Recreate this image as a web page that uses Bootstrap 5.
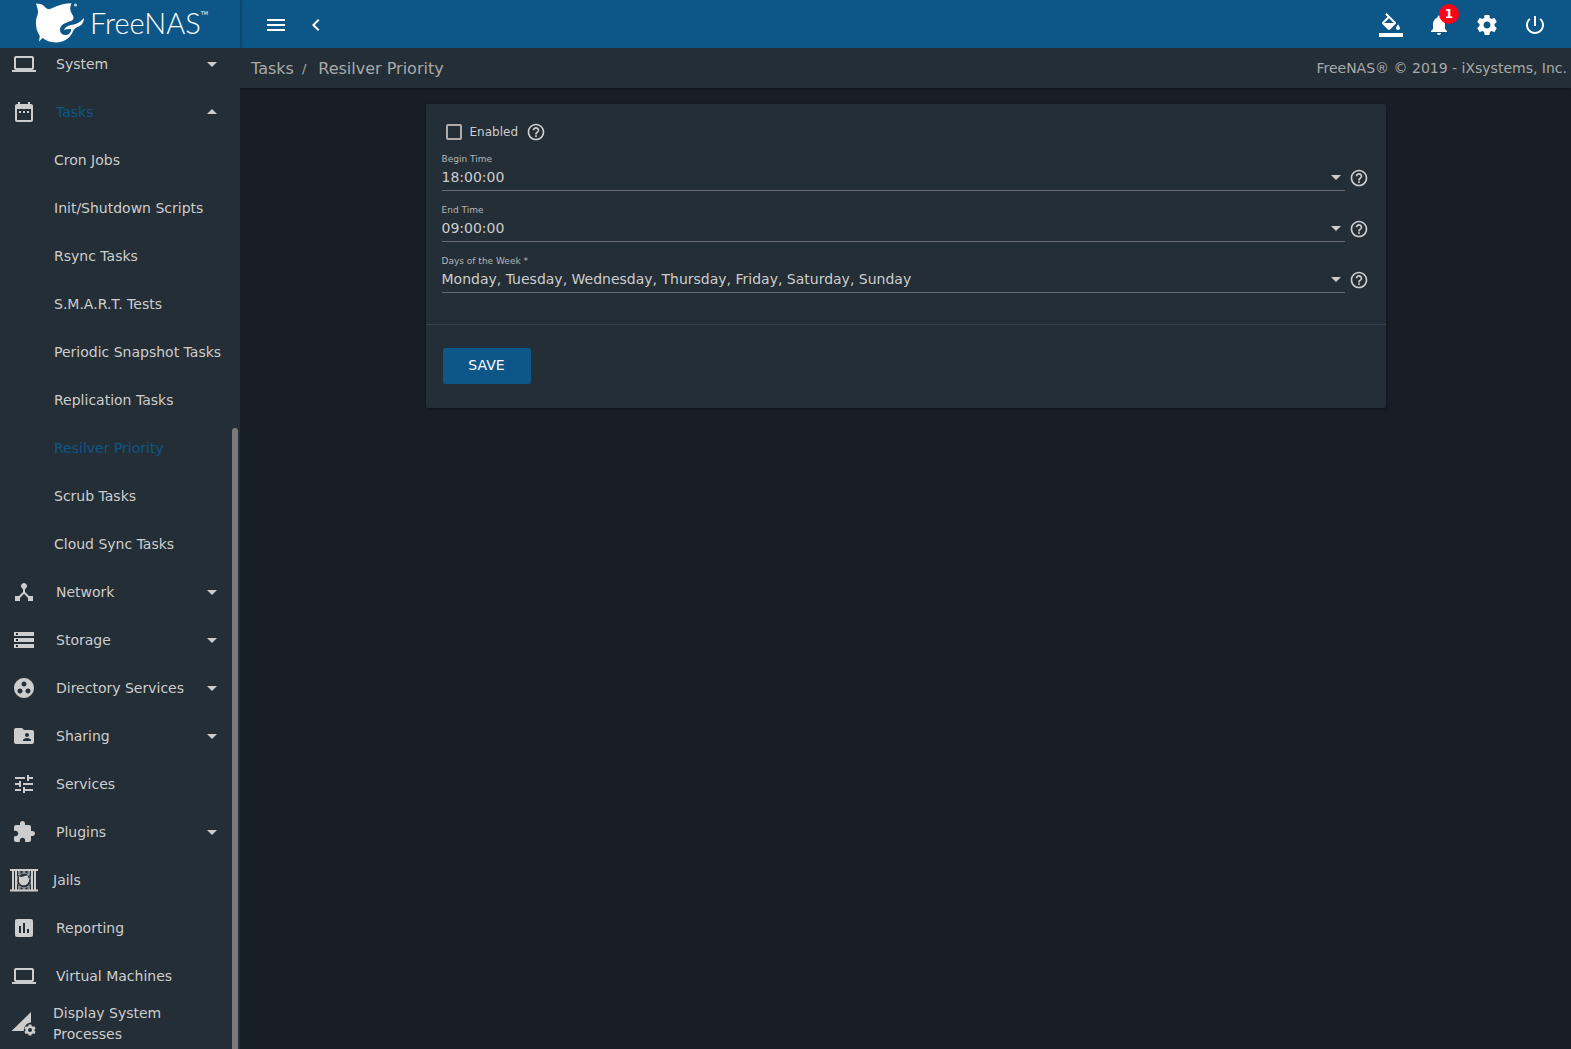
<!DOCTYPE html>
<html lang="en">
<head>
<meta charset="utf-8">
<meta name="viewport" content="width=device-width, initial-scale=1">
<title>FreeNAS - Resilver Priority</title>
<link href="https://cdn.jsdelivr.net/npm/bootstrap@5.3.0/dist/css/bootstrap.min.css" rel="stylesheet">
<style>
:root{--nas-blue:#0d5788;--nas-panel:#242e36;--nas-bg:#181e26;--nas-fg:#cdcdcd;--nas-dim:#a9a9a9}
body{background:var(--nas-bg);color:var(--nas-fg);font-family:"DejaVu Sans",sans-serif;font-size:14px;line-height:21px}
svg{fill:currentColor;flex:none;display:block}
.nas-top{background:var(--nas-blue);height:48px;color:#fff}
.nas-brand{width:240px;padding-left:35px;box-shadow:1px 0 3px rgba(0,0,0,.3);color:#fff;text-decoration:none}
.nas-word{font-family:Lato,"Open Sans",sans-serif;font-weight:300;font-size:29px;line-height:44px;padding-bottom:2px;margin-left:5px}
.nas-tm{font-size:5px;line-height:8px;margin-top:9px;align-self:flex-start}
.nas-tools{flex:1;padding:2px 16px 0 16px}
.icon-btn{width:40px;height:40px;padding:0;color:#fff;border:0;display:flex;align-items:center;justify-content:center;position:relative}
.icon-btn:hover{color:#fff}
.bell-count{position:absolute;top:-1px;right:0;width:20px;height:20px;border-radius:50%;background:#ff0018;font-size:12px;font-weight:700;line-height:21px}
.nas-side{width:240px;background:var(--nas-panel);padding-bottom:1px;position:relative}
.nas-thumb{position:absolute;right:2px;bottom:0;width:6px;height:62%;border-radius:3px 3px 0 0;background:#787a7b}
.side-item{display:flex;align-items:center;height:48px;flex:none;padding:0 16px 0 12px;color:var(--nas-fg);text-decoration:none}
.side-item .side-text{margin-left:20px;flex:1}
.side-wide{padding-left:10px;padding-right:48px}
.side-wide .side-text{margin-left:15px}
.side-sub{padding-left:54px}
.side-sub .side-text{margin-left:0}
.side-on{color:var(--nas-blue)}
.side-on svg{color:var(--nas-fg)}
.crumb-bar{background:var(--nas-panel);height:40px;padding:0 4px 0 11px;color:var(--nas-dim);box-shadow:0 1px 3px rgba(0,0,0,.35)}
.crumb-bar a,.crumb-bar .breadcrumb-item{color:var(--nas-dim);text-decoration:none;font-size:16px}
.crumb-bar .breadcrumb-item+.breadcrumb-item{padding-left:8px}
.crumb-bar .breadcrumb-item+.breadcrumb-item::before{color:var(--nas-dim);font-size:13px;padding-right:12px}
.nas-card{max-width:960px;background:var(--nas-panel);border-radius:2px;box-shadow:0 1px 3px rgba(0,0,0,.4)}
.nas-fields{padding:16px 16px 31px}
.check-row{height:24px;padding-left:4px;gap:8px;font-size:12px;margin-bottom:9px}
.check-row .nas-check{width:16px;height:16px;margin:0;border:2px solid #b0abab;border-radius:2px;background-color:transparent}
.field-row{gap:4px;padding-right:1px}
.field-row+.field-row{margin-top:13px}
.field-row label{font-size:9px;line-height:12px;color:#b4b6b8;display:block}
.nas-select{appearance:none;background:transparent;border:0;border-bottom:1px solid #6a6c75;border-radius:0;color:var(--nas-fg);height:26px;padding:0 24px 1px 0;width:100%;display:block}
.nas-select:focus{outline:0;border-color:#fff}
.nas-select option{background:var(--nas-panel)}
.select-wrap{position:relative}
.select-wrap svg{position:absolute;right:-3px;top:0;pointer-events:none}
.help-btn{border:0;background:transparent;padding:0;color:var(--nas-fg)}
.field-row .help-btn{margin-bottom:3px}
.nas-foot{border-top:1px solid #36424c;padding:23px 17px 24px}
.nas-save,.nas-save:hover{width:88px;height:36px;padding:0 0 2px;border:0;border-radius:2px;background:var(--nas-blue);color:#fff;font-size:14px}
</style>
</head>
<body class="vh-100 d-flex flex-column overflow-hidden">
<svg class="d-none" aria-hidden="true">
<symbol id="i-laptop" viewBox="0 0 24 24"><path d="M20 18c1.1 0 1.990-.9 1.990-2L22 6c0-1.100-.9-2-2-2H4c-1.100 0-2 .9-2 2v10c0 1.100.9 2 2 2H0v2h24v-2h-4zM4 6h16v10H4V6z"/></symbol>
<symbol id="i-down" viewBox="0 0 24 24"><path d="M7 10l5 5 5-5z"/></symbol>
<symbol id="i-up" viewBox="0 0 24 24"><path d="M7 14l5-5 5 5z"/></symbol>
<symbol id="i-help" viewBox="0 0 24 24"><path d="M11 18h2v-2h-2v2zm1-16C6.480 2 2 6.480 2 12s4.480 10 10 10 10-4.480 10-10S17.520 2 12 2zm0 18c-4.410 0-8-3.590-8-8s3.590-8 8-8 8 3.590 8 8-3.590 8-8 8zm0-14c-2.210 0-4 1.790-4 4h2c0-1.100.9-2 2-2s2 .9 2 2c0 2-3 1.750-3 5h2c0-2.250 3-2.500 3-5 0-2.210-1.790-4-4-4z"/></symbol>
</svg>

<header class="nas-top d-flex flex-shrink-0">
<a class="nas-brand h-100 d-flex align-items-center" href="#">
<svg width="50" height="48" viewBox="0 0 50 48" aria-hidden="true"><path d="M1 3.500C3 4 5 3.500 7 4.500c2 .8 3 3.500 6 4.700C18 9 23 3.500 36.500 3.200c-1.800 4-1.800 7 .2 10.300 1 1.800 2.200 3.500 1.800 5-.8 2-2.500 2.500-5.500 3.500-5 1.500-8.500 4.500-8 8.500.5 3.500 3.500 5 6.500 4.500 3-.8 5-3 4.500-6-2-.3-4.500 0-7 1 1-2.500 3.500-4.500 7-5 5-.7 9-2.500 13-7-.2 4.500-2.500 8-7.500 9.500-2.500 1-3 3-4.500 6C33.500 39 28 42.700 21 42.500c-6-.2-10-1.800-13.500-4.500L4 41.500 4.800 36C2 32 .6 27 1 21c.2-4 2.200-6 2-9.500C2.900 8 1.500 6 1 3.500z"/><circle cx="40.500" cy="5" r="1.600" opacity=".7"/></svg>
<span class="nas-word">FreeNAS</span><span class="nas-tm">TM</span></a>
<div class="nas-tools d-flex align-items-center">
<button class="btn icon-btn" type="button" aria-label="Menu"><svg width="24" height="24" viewBox="0 0 24 24"><path d="M3 18h18v-2H3v2zm0-5h18v-2H3v2zm0-7v2h18V6H3z"/></svg></button>
<button class="btn icon-btn" type="button" aria-label="Collapse"><svg width="24" height="24" viewBox="0 0 24 24"><path d="M15.410 7.410L14 6l-6 6 6 6 1.410-1.410L10.830 12z"/></svg></button>
<div class="d-flex gap-2 ms-auto">
<button class="btn icon-btn" type="button" aria-label="Theme"><svg width="24" height="24" viewBox="0 0 24 24"><path d="M16.560 8.940L7.620 0 6.210 1.410l2.380 2.380-5.150 5.150c-.59.59-.59 1.540 0 2.120l5.500 5.500c.29.29.68.44 1.060.44s.77-.15 1.060-.44l5.500-5.500c.59-.58.59-1.530 0-2.120zM5.210 10L10 5.210 14.790 10H5.210zM19 11.500s-2 2.170-2 3.500c0 1.100.9 2 2 2s2-.9 2-2c0-1.330-2-3.500-2-3.500zM0 20h24v4H0z"/></svg></button>
<button class="btn icon-btn" type="button" aria-label="Notifications"><svg width="24" height="24" viewBox="0 0 24 24"><path d="M12 22c1.100 0 2-.9 2-2h-4c0 1.100.89 2 2 2zm6-6v-5c0-3.070-1.640-5.640-4.500-6.320V4c0-.83-.67-1.500-1.500-1.500s-1.500.67-1.500 1.500v.68C7.630 5.360 6 7.920 6 11v5l-2 2v1h16v-1l-2-2z"/></svg><span class="bell-count">1</span></button>
<button class="btn icon-btn" type="button" aria-label="Settings"><svg width="24" height="24" viewBox="0 0 24 24"><path d="M19.430 12.980c.04-.32.07-.64.07-.98s-.03-.66-.07-.98l2.110-1.650c.19-.15.24-.42.12-.64l-2-3.460c-.12-.22-.39-.3-.61-.22l-2.490 1c-.52-.4-1.080-.73-1.690-.98l-.38-2.650C14.460 2.180 14.250 2 14 2h-4c-.25 0-.46.18-.49.42l-.38 2.650c-.61.25-1.170.59-1.690.98l-2.490-1c-.23-.09-.49 0-.61.22l-2 3.460c-.13.22-.07.49.12.64l2.110 1.650c-.04.32-.07.65-.07.98s.03.66.07.98l-2.110 1.650c-.19.15-.24.42-.12.64l2 3.460c.12.22.39.3.61.22l2.490-1c.52.4 1.080.73 1.690.98l.38 2.650c.03.24.24.42.49.42h4c.25 0 .46-.18.49-.42l.38-2.650c.61-.25 1.170-.59 1.690-.98l2.490 1c.23.09.49 0 .61-.22l2-3.460c.12-.22.07-.49-.12-.64l-2.110-1.650zM12 15.500c-1.930 0-3.500-1.570-3.500-3.500s1.570-3.500 3.500-3.500 3.500 1.570 3.500 3.500-1.570 3.500-3.500 3.500z"/></svg></button>
<button class="btn icon-btn" type="button" aria-label="Power"><svg width="24" height="24" viewBox="0 0 24 24"><path d="M13 3h-2v10h2V3zm4.830 2.170l-1.420 1.420C17.990 7.860 19 9.810 19 12c0 3.870-3.130 7-7 7s-7-3.130-7-7c0-2.190 1.010-4.140 2.580-5.420L6.170 5.170C4.230 6.820 3 9.260 3 12c0 4.970 4.030 9 9 9s9-4.030 9-9c0-2.740-1.230-5.180-3.170-6.830z"/></svg></button>
</div></div>
</header>

<div class="d-flex flex-grow-1 overflow-hidden">
<nav class="nas-side d-flex flex-column justify-content-end overflow-hidden flex-shrink-0">
<a class="side-item" href="#"><svg width="24" height="24"><use href="#i-laptop"/></svg><span class="side-text">System</span><svg width="24" height="24"><use href="#i-down"/></svg></a>
<a class="side-item side-on" href="#"><svg width="24" height="24" viewBox="0 0 24 24"><path d="M9 11H7v2h2v-2zm4 0h-2v2h2v-2zm4 0h-2v2h2v-2zm2-7h-1V2h-2v2H8V2H6v2H5c-1.110 0-1.990.9-1.990 2L3 20c0 1.100.89 2 2 2h14c1.100 0 2-.9 2-2V6c0-1.100-.9-2-2-2zm0 16H5V9h14v11z"/></svg><span class="side-text">Tasks</span><svg width="24" height="24"><use href="#i-up"/></svg></a>
<a class="side-item side-sub" href="#"><span class="side-text">Cron Jobs</span></a>
<a class="side-item side-sub" href="#"><span class="side-text">Init/Shutdown Scripts</span></a>
<a class="side-item side-sub" href="#"><span class="side-text">Rsync Tasks</span></a>
<a class="side-item side-sub" href="#"><span class="side-text">S.M.A.R.T. Tests</span></a>
<a class="side-item side-sub" href="#"><span class="side-text">Periodic Snapshot Tasks</span></a>
<a class="side-item side-sub" href="#"><span class="side-text">Replication Tasks</span></a>
<a class="side-item side-sub side-on" href="#" aria-current="page"><span class="side-text">Resilver Priority</span></a>
<a class="side-item side-sub" href="#"><span class="side-text">Scrub Tasks</span></a>
<a class="side-item side-sub" href="#"><span class="side-text">Cloud Sync Tasks</span></a>
<a class="side-item" href="#"><svg width="24" height="24" viewBox="0 0 24 24"><path d="M17 16l-4-4V8.820C14.160 8.400 15 7.300 15 6c0-1.660-1.340-3-3-3S9 4.340 9 6c0 1.300.84 2.400 2 2.820V12l-4 4H3v5h5v-3.050l4-4.200 4 4.200V21h5v-5h-4z"/></svg><span class="side-text">Network</span><svg width="24" height="24"><use href="#i-down"/></svg></a>
<a class="side-item" href="#"><svg width="24" height="24" viewBox="0 0 24 24"><path d="M2 20h20v-4H2v4zm2-3h2v2H4v-2zM2 4v4h20V4H2zm4 3H4V5h2v2zm-4 7h20v-4H2v4zm2-3h2v2H4v-2z"/></svg><span class="side-text">Storage</span><svg width="24" height="24"><use href="#i-down"/></svg></a>
<a class="side-item" href="#"><svg width="24" height="24" viewBox="0 0 24 24"><path d="M12 2C6.480 2 2 6.480 2 12s4.480 10 10 10 10-4.480 10-10S17.520 2 12 2zM8 17.500c-1.380 0-2.500-1.120-2.500-2.500s1.120-2.500 2.500-2.500 2.500 1.120 2.500 2.500-1.120 2.500-2.500 2.500zM9.500 8c0-1.380 1.120-2.500 2.500-2.500s2.500 1.120 2.500 2.500-1.120 2.500-2.500 2.500S9.500 9.380 9.500 8zm6.500 9.500c-1.380 0-2.500-1.120-2.500-2.500s1.120-2.500 2.500-2.500 2.500 1.120 2.500 2.500-1.120 2.500-2.500 2.500z"/></svg><span class="side-text">Directory Services</span><svg width="24" height="24"><use href="#i-down"/></svg></a>
<a class="side-item" href="#"><svg width="24" height="24" viewBox="0 0 24 24"><path d="M20 6h-8l-2-2H4c-1.100 0-1.990.9-1.990 2L2 18c0 1.100.9 2 2 2h16c1.100 0 2-.9 2-2V8c0-1.100-.9-2-2-2zm-5 3c1.100 0 2 .9 2 2s-.9 2-2 2-2-.9-2-2 .9-2 2-2zm4 8h-8v-1c0-1.330 2.670-2 4-2s4 .67 4 2v1z"/></svg><span class="side-text">Sharing</span><svg width="24" height="24"><use href="#i-down"/></svg></a>
<a class="side-item" href="#"><svg width="24" height="24" viewBox="0 0 24 24"><path d="M3 17v2h6v-2H3zM3 5v2h10V5H3zm10 16v-2h8v-2h-8v-2h-2v6h2zM7 9v2H3v2h4v2h2V9H7zm14 4v-2H11v2h10zm-6-4h2V7h4V5h-4V3h-2v6z"/></svg><span class="side-text">Services</span></a>
<a class="side-item" href="#"><svg width="24" height="24" viewBox="0 0 24 24"><path d="M20.500 11H19V7c0-1.100-.9-2-2-2h-4V3.500C13 2.120 11.880 1 10.500 1S8 2.120 8 3.500V5H4c-1.100 0-1.990.9-1.990 2v3.800H3.500c1.490 0 2.700 1.210 2.700 2.700s-1.210 2.700-2.700 2.700H2V20c0 1.100.9 2 2 2h3.800v-1.500c0-1.490 1.210-2.700 2.700-2.700 1.490 0 2.700 1.210 2.700 2.700V22H17c1.100 0 2-.9 2-2v-4h1.500c1.380 0 2.500-1.120 2.500-2.500S21.880 11 20.500 11z"/></svg><span class="side-text">Plugins</span><svg width="24" height="24"><use href="#i-down"/></svg></a>
<a class="side-item side-wide" href="#"><svg width="28" height="24" viewBox="0 0 28 24"><path d="M0 1h28v2H0zM0 21.500h28v2H0zM2 3h2v19H2zM5 3h2v19H5zM21 3h2v19h-2zM24 3h2v19h-2z"/><path d="M8 3h2.500v4H8zM17.500 3H20v4h-2.500zM8 18h2.500v4H8zM17.500 18H20v4h-2.500zM12.500 3h3v2h-3zM12.500 20h3v2h-3z" opacity=".6"/><circle cx="14" cy="12.500" r="7.200" fill="none" stroke="currentColor" stroke-width="1" opacity=".6"/><path d="M9 8.500c2 .6 3 .6 4.200 0 1.500-.9 3.300-1.200 5-1-.3 1.500.2 2 .4 3l.8-.5c0 4-2 7.300-5.500 7.300S8.600 15 8.900 12z"/></svg><span class="side-text">Jails</span></a>
<a class="side-item" href="#"><svg width="24" height="24" viewBox="0 0 24 24"><path d="M19 3H5c-1.100 0-2 .9-2 2v14c0 1.100.9 2 2 2h14c1.100 0 2-.9 2-2V5c0-1.100-.9-2-2-2zM9 17H7v-7h2v7zm4 0h-2V7h2v10zm4 0h-2v-4h2v4z"/></svg><span class="side-text">Reporting</span></a>
<a class="side-item" href="#"><svg width="24" height="24"><use href="#i-laptop"/></svg><span class="side-text">Virtual Machines</span></a>
<a class="side-item side-wide" href="#"><svg width="28" height="24" viewBox="0 0 28 24"><path d="M21 0v10.500c-4 .2-7.200 3.500-7.200 8.500H1.500z"/><path fill-rule="evenodd" d="M18.700 12.500h2.600l.4 1.500 1.200.7 1.500-.5 1.200 2.200-1.100 1v1.300l1.100 1-1.200 2.200-1.500-.5-1.200.7-.4 1.400h-2.600l-.4-1.400-1.200-.7-1.500.5-1.200-2.200 1.100-1v-1.300l-1.100-1 1.200-2.200 1.500.5 1.200-.7zM20 16a2 2 0 1 0 0 4 2 2 0 0 0 0-4z"/></svg><span class="side-text">Display System Processes</span></a>
<div class="nas-thumb"></div>
</nav>

<main class="flex-grow-1">
<div class="crumb-bar d-flex align-items-center justify-content-between">
<ol class="breadcrumb mb-0"><li class="breadcrumb-item"><a href="#">Tasks</a></li><li class="breadcrumb-item active">Resilver Priority</li></ol>
<span>FreeNAS® © 2019 - iXsystems, Inc.</span>
</div>
<form class="nas-card mx-auto mt-3">
<div class="nas-fields">
<div class="check-row d-flex align-items-center"><input class="nas-check form-check-input" type="checkbox" id="enabled"><label for="enabled">Enabled</label><button class="help-btn" type="button" aria-label="Help"><svg width="20" height="20"><use href="#i-help"/></svg></button></div>
<div class="field-row d-flex align-items-end"><div class="flex-grow-1"><label for="begin">Begin Time</label><div class="select-wrap"><select id="begin" class="nas-select"><option>18:00:00</option></select><svg width="24" height="24"><use href="#i-down"/></svg></div></div><button class="help-btn" type="button" aria-label="Help"><svg width="20" height="20"><use href="#i-help"/></svg></button></div>
<div class="field-row d-flex align-items-end"><div class="flex-grow-1"><label for="end">End Time</label><div class="select-wrap"><select id="end" class="nas-select"><option>09:00:00</option></select><svg width="24" height="24"><use href="#i-down"/></svg></div></div><button class="help-btn" type="button" aria-label="Help"><svg width="20" height="20"><use href="#i-help"/></svg></button></div>
<div class="field-row d-flex align-items-end"><div class="flex-grow-1"><label for="days">Days of the Week *</label><div class="select-wrap"><select id="days" class="nas-select"><option>Monday, Tuesday, Wednesday, Thursday, Friday, Saturday, Sunday</option></select><svg width="24" height="24"><use href="#i-down"/></svg></div></div><button class="help-btn" type="button" aria-label="Help"><svg width="20" height="20"><use href="#i-help"/></svg></button></div>
</div>
<div class="nas-foot"><button class="btn nas-save d-block" type="submit">SAVE</button></div>
</form>
</main>
</div>
<script src="https://cdn.jsdelivr.net/npm/bootstrap@5.3.0/dist/js/bootstrap.bundle.min.js"></script>
</body>
</html>
